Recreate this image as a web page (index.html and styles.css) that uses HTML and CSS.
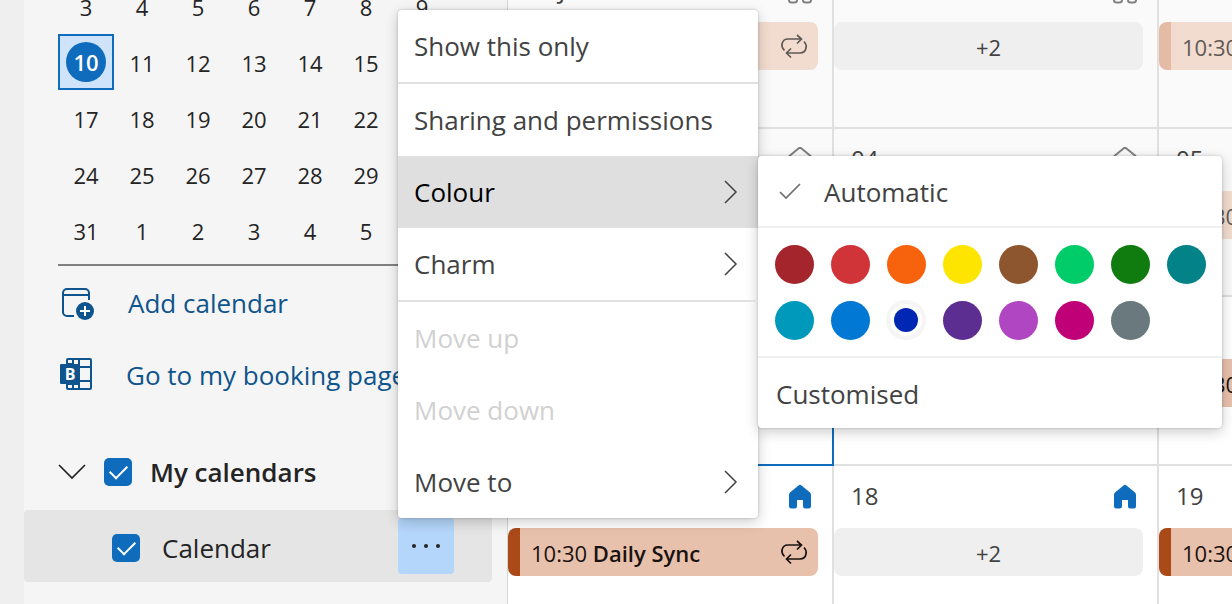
FILE: index.html
```html
<!DOCTYPE html>
<html lang="en-GB">
<head>
  <meta charset="UTF-8">
  <meta name="viewport" content="width=device-width, initial-scale=1">
  <title>Calendar</title>
  <link rel="stylesheet" href="styles.css">
</head>
<body>
  <!-- shared icons -->
  <svg class="sprite" aria-hidden="true">
    <symbol id="chevron" viewBox="0 0 16 26"><path d="M3 2l11 11L3 24"/></symbol>
    <symbol id="repeat" viewBox="0 0 28 28">
      <path d="M4.500 18.500C2.500 16.500 1.500 14.500 2 12c.6-3 3-5 6-5h13M17 3l4.500 4L17 11.500M24 9.500c2 2 2.600 4 2 6.500-.6 3-3 5-6 5H7M11 16.500L6.500 21l4.500 4.500"/>
    </symbol>
    <symbol id="home" viewBox="0 0 24 26">
      <path d="M10.500 1.500a2.300 2.300 0 013 0l8.500 7a3 3 0 011 2.300V22a2.500 2.500 0 01-2.500 2.500h-3A2.500 2.500 0 0115 22v-6H9v6a2.500 2.500 0 01-2.500 2.500h-3A2.500 2.500 0 011 22V10.800a3 3 0 011-2.300z"/>
    </symbol>
  </svg>

  <div class="app">
    <div class="rail"></div>

    <aside class="sidebar">
      <table class="mini-month">
        <tr><td>3</td><td>4</td><td>5</td><td>6</td><td>7</td><td>8</td><td>9</td></tr>
        <tr><td class="today"><span>10</span></td><td>11</td><td>12</td><td>13</td><td>14</td><td>15</td><td>16</td></tr>
        <tr><td>17</td><td>18</td><td>19</td><td>20</td><td>21</td><td>22</td><td>23</td></tr>
        <tr><td>24</td><td>25</td><td>26</td><td>27</td><td>28</td><td>29</td><td>30</td></tr>
        <tr><td>31</td><td>1</td><td>2</td><td>3</td><td>4</td><td>5</td><td>6</td></tr>
      </table>

      <div class="actions">
        <button class="action">
          <svg width="36" height="36" viewBox="0 0 36 36" aria-hidden="true">
            <path class="line" d="M16 31H9a4 4 0 01-4-4V8a4 4 0 014-4h18a4 4 0 014 4v7M5 10h26"/>
            <circle cx="27" cy="26" r="9"/>
            <path class="plus" d="M27 21v10M22 26h10"/>
          </svg>
          Add calendar
        </button>
        <button class="action booking">
          <svg width="34" height="36" viewBox="0 0 34 36" aria-hidden="true">
            <path class="line" d="M9 8V3a1 1 0 011-1h22a1 1 0 011 1v28a1 1 0 01-1 1H10a1 1 0 01-1-1v-5M15 2v6M15 26v6M21 2v30M9 7h6M15 10h18M21 24h12M9 27h12"/>
            <rect x="2" y="7" width="20" height="20" rx="1"/>
            <text x="12" y="23" text-anchor="middle">B</text>
          </svg>
          Go to my booking page
        </button>
      </div>

      <div class="group">
        <svg class="expand" width="28" height="16" viewBox="0 0 28 16" aria-hidden="true"><path d="M1 1l13 13L27 1"/></svg>
        <label><input type="checkbox" checked> My calendars</label>
      </div>

      <div class="calendar-row">
        <label><input type="checkbox" checked> Calendar</label>
        <div class="more">
          <button class="more-button" aria-label="More options">
            <svg width="30" height="6" viewBox="0 0 30 6" aria-hidden="true">
              <circle cx="3" cy="3" r="2"/><circle cx="15" cy="3" r="2"/><circle cx="27" cy="3" r="2"/>
            </svg>
          </button>

          <ul class="menu">
            <li><button>Show this only</button></li>
            <li class="divided"><button>Sharing and permissions</button></li>
            <li class="open">
              <button>Colour <svg class="chevron"><use href="#chevron"/></svg></button>
              <div class="submenu">
                <button class="automatic">
                  <svg width="24" height="18" viewBox="0 0 24 18" aria-hidden="true"><path d="M2 9l6 6L22 1"/></svg>
                  Automatic
                </button>
                <div class="swatches">
                  <input type="radio" name="colour" class="dark-red" aria-label="Dark red">
                  <input type="radio" name="colour" class="red" aria-label="Red">
                  <input type="radio" name="colour" class="orange" aria-label="Orange">
                  <input type="radio" name="colour" class="yellow" aria-label="Yellow">
                  <input type="radio" name="colour" class="brown" aria-label="Brown">
                  <input type="radio" name="colour" class="light-green" aria-label="Light green">
                  <input type="radio" name="colour" class="green" aria-label="Green">
                  <input type="radio" name="colour" class="teal" aria-label="Teal">
                  <input type="radio" name="colour" class="light-teal" aria-label="Light teal">
                  <input type="radio" name="colour" class="blue" aria-label="Blue">
                  <input type="radio" name="colour" class="dark-blue" aria-label="Dark blue" checked>
                  <input type="radio" name="colour" class="purple" aria-label="Purple">
                  <input type="radio" name="colour" class="orchid" aria-label="Orchid">
                  <input type="radio" name="colour" class="magenta" aria-label="Magenta">
                  <input type="radio" name="colour" class="grey" aria-label="Grey">
                </div>
                <button class="customised">Customised</button>
              </div>
            </li>
            <li><button>Charm <svg class="chevron"><use href="#chevron"/></svg></button></li>
            <li class="divided"><button disabled>Move up</button></li>
            <li><button disabled>Move down</button></li>
            <li><button>Move to <svg class="chevron"><use href="#chevron"/></svg></button></li>
          </ul>
        </div>
      </div>
    </aside>

    <main class="view">
      <div class="month">
        <div class="day past">
          <div class="day-head">27 Jul <svg class="home"><use href="#home"/></svg></div>
          <button class="event"><svg class="repeat"><use href="#repeat"/></svg></button>
        </div>
        <div class="day past">
          <div class="day-head">28 <svg class="home"><use href="#home"/></svg></div>
          <button class="overflow">+2</button>
        </div>
        <div class="day past">
          <div class="day-head">29 <svg class="home"><use href="#home"/></svg></div>
          <button class="event"><span>10:30 <b>Daily Sync</b></span><svg class="repeat"><use href="#repeat"/></svg></button>
        </div>

        <div class="day past">
          <div class="day-head"><svg class="home"><use href="#home"/></svg></div>
        </div>
        <div class="day past">
          <div class="day-head">04 <svg class="home"><use href="#home"/></svg></div>
        </div>
        <div class="day past">
          <div class="day-head">05 <svg class="home"><use href="#home"/></svg></div>
          <button class="event"><span>10:30 <b>Daily Sync</b></span></button>
        </div>

        <div class="day current"></div>
        <div class="day"></div>
        <div class="day">
          <div class="day-head"></div>
          <button class="event"><span>10:30 <b>Daily Sync</b></span></button>
        </div>

        <div class="day">
          <div class="day-head"><svg class="home"><use href="#home"/></svg></div>
          <button class="event"><span>10:30 <b>Daily Sync</b></span><svg class="repeat"><use href="#repeat"/></svg></button>
        </div>
        <div class="day">
          <div class="day-head">18 <svg class="home"><use href="#home"/></svg></div>
          <button class="overflow">+2</button>
        </div>
        <div class="day">
          <div class="day-head">19 <svg class="home"><use href="#home"/></svg></div>
          <button class="event"><span>10:30 <b>Daily Sync</b></span><svg class="repeat"><use href="#repeat"/></svg></button>
        </div>
      </div>
    </main>
  </div>
</body>
</html>
```

FILE: styles.css
```css
* {
  box-sizing: border-box;
}
body {
  margin: 0;
  font-family: "Open Sans", "Noto Sans", sans-serif;
  font-size: 26px;
  color: #242424;
  background: #fff;
  overflow: hidden;
}
button {
  font: inherit;
  color: inherit;
  background: none;
  border: none;
  padding: 0;
  cursor: pointer;
}
svg {
  flex: none;
  fill: none;
}
.sprite {
  display: none;
}
.app {
  display: flex;
  height: 100vh;
}
.rail {
  flex: none;
  width: 24px;
  background: #efefef;
}

/* sidebar */
.sidebar {
  flex: none;
  width: 483px;
  background: #f5f5f5;
  position: relative;
  z-index: 1;
}
.mini-month {
  margin: -22px 34px 0;
  border-collapse: collapse;
  table-layout: fixed;
  width: 392px;
  font-size: 22px;
}
.mini-month td {
  height: 56px;
  padding: 2px 0 0;
  text-align: center;
}
.mini-month .today {
  padding: 0;
  background: #cfe4fa;
  box-shadow: inset 0 0 0 2px #0f6cbd;
}
.today span {
  display: block;
  width: 40px;
  margin: 0 auto;
  line-height: 40px;
  border-radius: 50%;
  background: #0f6cbd;
  color: #fff;
  font-weight: 600;
}
.actions {
  margin: 6px 34px 0;
  padding-top: 1px;
  border-top: 2px solid #808080;
}
.action {
  display: flex;
  align-items: center;
  gap: 34px;
  width: 100%;
  height: 72px;
  color: #0f548c;
  white-space: nowrap;
}
.action svg {
  fill: #0f548c;
}
.action .line {
  fill: none;
  stroke: #0f548c;
  stroke-width: 2;
}
.action .plus {
  stroke: #fff;
  stroke-width: 2;
}
.action text {
  fill: #fff;
  font-size: 16px;
  font-weight: 700;
}
.group {
  display: flex;
  align-items: center;
  gap: 18px;
  height: 72px;
  margin: 25px 0 2px;
  padding-left: 34px;
  font-weight: 600;
}
.expand {
  stroke: #242424;
  stroke-width: 1.7;
}
.sidebar label {
  display: flex;
  align-items: center;
  gap: 18px;
}
.sidebar input[type="checkbox"] {
  appearance: none;
  display: grid;
  place-items: center;
  width: 28px;
  height: 28px;
  margin: 0;
  border-radius: 5px;
  background: #0f6cbd;
}
.sidebar input[type="checkbox"]::after {
  content: "";
  width: 15px;
  height: 8px;
  margin-bottom: 4px;
  border: solid #fff;
  border-width: 0 0 2px 2px;
  transform: rotate(-45deg);
}
.calendar-row {
  display: flex;
  align-items: center;
  justify-content: space-between;
  height: 72px;
  margin-right: 15px;
  padding: 0 38px 0 88px;
  border-radius: 4px;
  background: #e5e5e5;
}
.calendar-row label {
  gap: 22px;
  padding-top: 4px;
}
.more {
  position: relative;
}
.more-button {
  display: grid;
  place-items: center;
  width: 56px;
  height: 56px;
  border-radius: 4px;
  background: #b4d6fa;
}
.more-button svg {
  fill: #242424;
}

/* context menu */
.menu {
  position: absolute;
  bottom: 100%;
  left: 0;
  width: 360px;
  margin: 0;
  padding: 0;
  list-style: none;
  border-radius: 4px;
  background: #fff;
  color: #424242;
  box-shadow: 0 4px 14px rgba(0, 0, 0, 0.2), 0 0 3px rgba(0, 0, 0, 0.2);
}
.menu li {
  position: relative;
}
.menu li > button {
  display: flex;
  align-items: center;
  justify-content: space-between;
  width: 100%;
  height: 72px;
  padding: 0 20px 0 16px;
}
.menu .divided {
  border-top: 2px solid #e0e0e0;
}
.menu .open > button {
  background: #dfdfdf;
  color: #000;
}
.menu button:disabled {
  color: #d1d1d1;
}
.chevron {
  width: 16px;
  height: 26px;
  stroke: #424242;
  stroke-width: 1.5;
}
.submenu {
  position: absolute;
  top: 0;
  left: 100%;
  width: 464px;
  border-radius: 4px;
  background: #fff;
  box-shadow: 0 4px 14px rgba(0, 0, 0, 0.2), 0 0 3px rgba(0, 0, 0, 0.2);
}
.automatic,
.customised {
  display: flex;
  align-items: center;
  gap: 22px;
  width: 100%;
  height: 70px;
  padding: 2px 20px 0;
}
.customised {
  padding-left: 18px;
}
.automatic svg {
  stroke: #707070;
  stroke-width: 1.7;
}
.swatches {
  display: grid;
  grid-template-columns: repeat(8, 56px);
  grid-auto-rows: 56px;
  place-items: center;
  padding: 8px;
  border: solid #f0f0f0;
  border-width: 2px 0;
}
.swatches input {
  appearance: none;
  width: 39px;
  height: 39px;
  margin: 0;
  border-radius: 50%;
}
.swatches input:checked {
  width: 40px;
  height: 40px;
  padding: 4px;
  border: 4px solid #f5f5f5;
  background-clip: content-box;
}
.dark-red { background: #a4262c; }
.red { background: #d13438; }
.orange { background: #f7630c; }
.yellow { background: #fee500; }
.brown { background: #8e562e; }
.light-green { background: #00cc6a; }
.green { background: #107c10; }
.teal { background: #038387; }
.light-teal { background: #0099bc; }
.blue { background: #0078d4; }
.dark-blue { background: #0027b4; }
.purple { background: #5c2e91; }
.orchid { background: #b146c2; }
.magenta { background: #bf0077; }
.grey { background: #69797e; }

/* month view */
.view {
  flex: 1;
  min-width: 0;
  overflow: hidden;
  border-left: 1px solid #d6d6d6;
}
.month {
  display: grid;
  grid-template-columns: 326px 325px 325px;
  grid-template-rows: 169px 168px 169px 168px;
  margin-top: -40px;
}
.day {
  border: solid #e0e0e0;
  border-width: 0 2px 2px 0;
}
.day.past {
  background: #fafafa;
}
.day.current {
  border-color: #0f6cbd;
}
.day-head {
  display: flex;
  align-items: center;
  justify-content: space-between;
  height: 62px;
  padding: 0 19px 4px 17px;
  font-size: 24px;
  color: #424242;
}
.home {
  width: 26px;
  height: 26px;
  margin: 4px 0 0 auto;
  fill: #0f6cbd;
}
.past .home {
  fill: none;
  stroke: #808080;
  stroke-width: 2;
}
.event,
.overflow {
  display: flex;
  align-items: center;
  justify-content: space-between;
  width: calc(100% - 14px);
  height: 48px;
  padding-top: 2px;
  border-radius: 8px;
  font-size: 22px;
}
.event {
  padding-left: 11px;
  padding-right: 10px;
  border-left: 12px solid #ab4a19;
  background: #e8c1ac;
  color: #1a1210;
}
.event b {
  font-weight: 600;
}
.overflow {
  justify-content: center;
  background: #efefef;
  color: #424242;
}
.past .event {
  border-color: #e5bba6;
  background: #f2dccf;
  color: #605a57;
}
.repeat {
  width: 28px;
  height: 28px;
  margin: 0 0 2px auto;
  stroke: currentColor;
  stroke-width: 1.7;
}
```
